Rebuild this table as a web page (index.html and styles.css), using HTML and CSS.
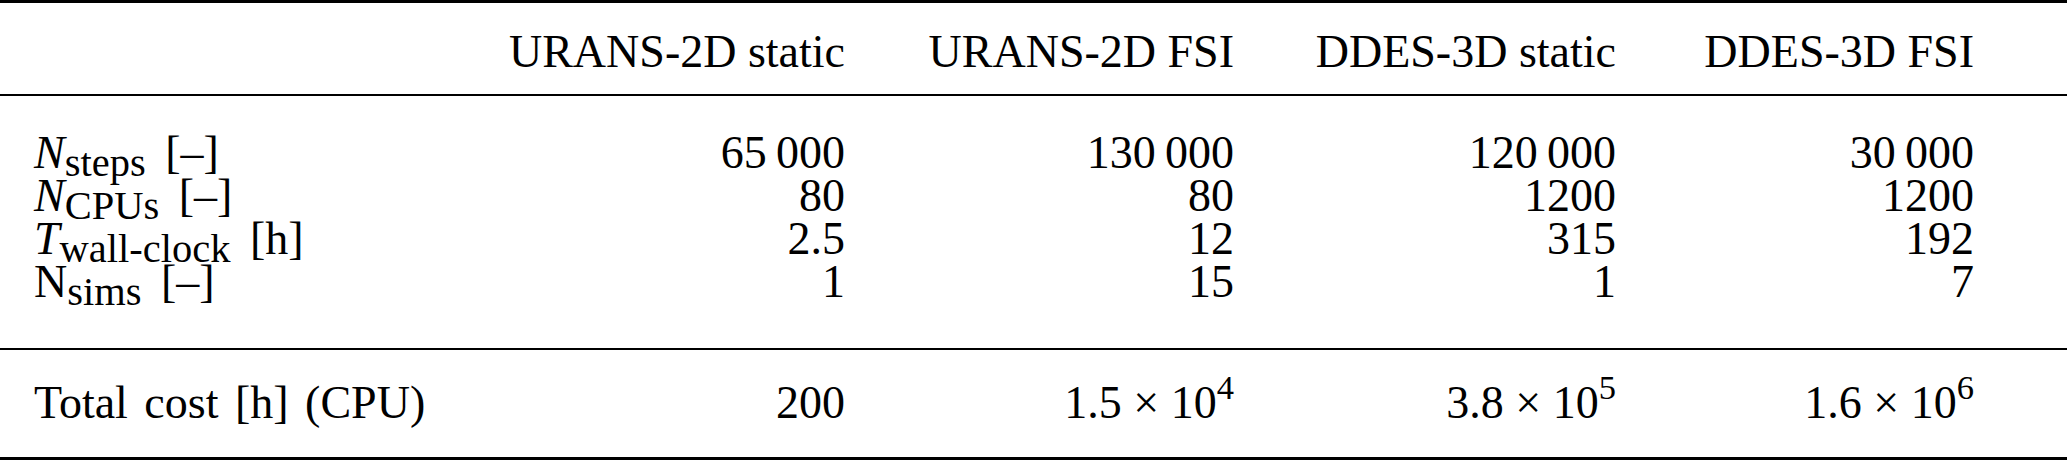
FILE: index.html
```html
<!DOCTYPE html>
<html lang="en">
<head>
    <meta charset="UTF-8">
    <title>Computational cost</title>
    <link rel="stylesheet" href="styles.css">
</head>
<body>
    <table class="cost-table">
        <colgroup>
            <col class="col-label">
            <col class="col-a">
            <col class="col-b">
            <col class="col-c">
            <col class="col-d">
        </colgroup>
        <thead>
            <tr>
                <th></th>
                <th>URANS-2D static</th>
                <th>URANS-2D FSI</th>
                <th>DDES-3D static</th>
                <th>DDES-3D FSI</th>
            </tr>
        </thead>
        <tbody>
            <tr class="first">
                <td><i>N</i><sub>steps</sub> [–]</td>
                <td>65&#8201;000</td>
                <td>130&#8201;000</td>
                <td>120&#8201;000</td>
                <td>30&#8201;000</td>
            </tr>
            <tr>
                <td><i>N</i><sub>CPUs</sub> [–]</td>
                <td>80</td>
                <td>80</td>
                <td>1200</td>
                <td>1200</td>
            </tr>
            <tr>
                <td><i>T</i><sub>wall-clock</sub> [h]</td>
                <td>2.5</td>
                <td>12</td>
                <td>315</td>
                <td>192</td>
            </tr>
            <tr class="last">
                <td>N<sub>sims</sub> [–]</td>
                <td>1</td>
                <td>15</td>
                <td>1</td>
                <td>7</td>
            </tr>
        </tbody>
        <tfoot>
            <tr>
                <td>Total cost [h] (CPU)</td>
                <td>200</td>
                <td>1.5 × 10<sup>4</sup></td>
                <td>3.8 × 10<sup>5</sup></td>
                <td>1.6 × 10<sup>6</sup></td>
            </tr>
        </tfoot>
    </table>
</body>
</html>
```

FILE: styles.css
```css
body {
    margin: 0;
    padding: 0;
    background: #fff;
    color: #000;
    font-family: "Liberation Serif", "Times New Roman", serif;
    font-size: 46px;
}
.cost-table {
    width: 2067px;
    border-collapse: collapse;
    table-layout: fixed;
}
.col-label {
    width: 500px;
}
.col-a {
    width: 345px;
}
.col-b {
    width: 389px;
}
.col-c {
    width: 382px;
}
.col-d {
    width: 451px;
}
.cost-table th,
.cost-table td {
    padding: 0;
    text-align: right;
    font-weight: normal;
    line-height: 43px;
    white-space: nowrap;
}
.cost-table th:first-child,
.cost-table td:first-child {
    text-align: left;
    padding-left: 34px;
    word-spacing: 5px;
}
.cost-table th:last-child,
.cost-table td:last-child {
    padding-right: 93px;
}
.cost-table thead th {
    border-top: 3px solid #000;
    border-bottom: 2px solid #000;
    padding-top: 27px;
    padding-bottom: 21px;
}
.cost-table tbody tr.first td {
    padding-top: 35px;
}
.cost-table tbody tr.last td {
    padding-bottom: 45px;
}
.cost-table tfoot td {
    border-top: 2px solid #000;
    border-bottom: 3px solid #000;
    padding-top: 31px;
    padding-bottom: 33px;
}
sub {
    font-size: 0.88em;
    line-height: 0;
    vertical-align: -0.2em;
    margin-right: 3px;
}
sup {
    font-size: 0.75em;
    line-height: 0;
    vertical-align: 0.55em;
}
```
